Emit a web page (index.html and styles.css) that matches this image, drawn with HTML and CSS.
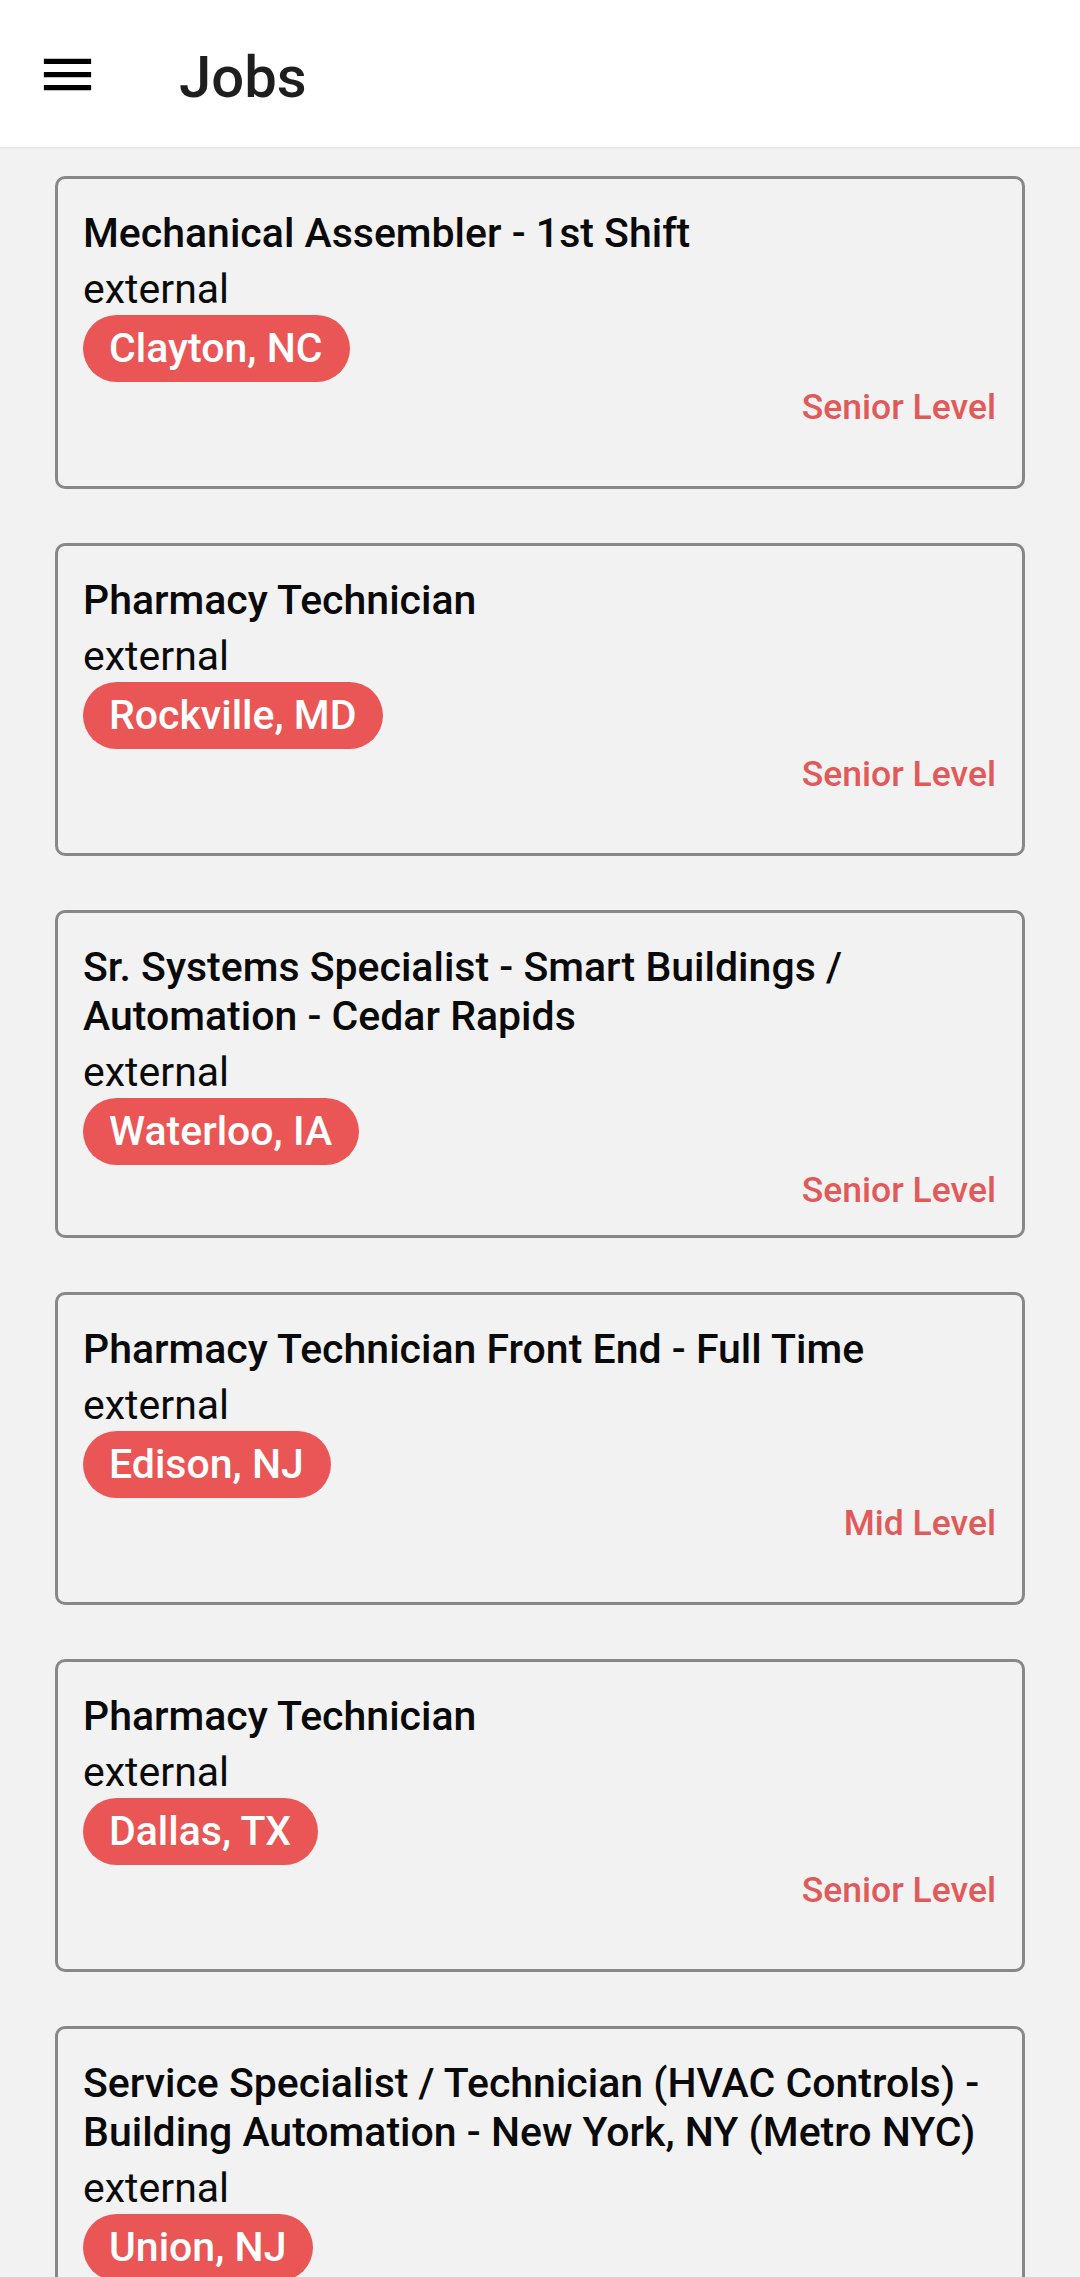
FILE: index.html
```html
<!DOCTYPE html>
<html lang="en">
<head>
<meta charset="utf-8">
<title>Jobs</title>
<link rel="stylesheet" href="styles.css">
</head>
<body>
<header class="appbar">
  <svg class="menu-icon" viewBox="0 0 24 24" aria-hidden="true"><path d="M3 18h18v-2H3v2zm0-5h18v-2H3v2zm0-7v2h18V6H3z"/></svg>
  <h1 class="appbar-title">Jobs</h1>
</header>
<main class="job-list">
  <article class="job-card">
    <div class="job-title">Mechanical Assembler - 1st Shift</div>
    <div class="job-source">external</div>
    <div class="job-location">Clayton, NC</div>
    <div class="job-level">Senior Level</div>
  </article>
  <article class="job-card">
    <div class="job-title">Pharmacy Technician</div>
    <div class="job-source">external</div>
    <div class="job-location">Rockville, MD</div>
    <div class="job-level">Senior Level</div>
  </article>
  <article class="job-card">
    <div class="job-title">Sr. Systems Specialist - Smart Buildings / Automation - Cedar Rapids</div>
    <div class="job-source">external</div>
    <div class="job-location">Waterloo, IA</div>
    <div class="job-level">Senior Level</div>
  </article>
  <article class="job-card">
    <div class="job-title">Pharmacy Technician Front End - Full Time</div>
    <div class="job-source">external</div>
    <div class="job-location">Edison, NJ</div>
    <div class="job-level">Mid Level</div>
  </article>
  <article class="job-card">
    <div class="job-title">Pharmacy Technician</div>
    <div class="job-source">external</div>
    <div class="job-location">Dallas, TX</div>
    <div class="job-level">Senior Level</div>
  </article>
  <article class="job-card">
    <div class="job-title">Service Specialist / Technician (HVAC Controls) - Building Automation - New York, NY (Metro NYC)</div>
    <div class="job-source">external</div>
    <div class="job-location">Union, NJ</div>
    <div class="job-level">Senior Level</div>
  </article>
</main>
</body>
</html>
```
FILE: styles.css
```css
html, body {
  margin: 0;
  padding: 0;
}
body {
  background: #f2f2f2;
  font-family: Roboto, "Noto Sans", "Liberation Sans", sans-serif;
  color: #000;
  overflow: hidden;
}
.appbar {
  height: 147px;
  background: #ffffff;
  display: flex;
  align-items: center;
  padding-left: 36px;
  box-sizing: border-box;
  box-shadow: 0 1px 2px rgba(0, 0, 0, 0.08);
  position: relative;
  z-index: 1;
}
.menu-icon {
  width: 63px;
  height: 63px;
  fill: #000;
  flex: none;
  margin-top: 2px;
}
.appbar-title {
  margin: 6px 0 0 80px;
  font-size: 58px;
  font-weight: 500;
  color: #1e1e1e;
  line-height: 1;
}
.job-list {
  display: flex;
  flex-direction: column;
  gap: 54px;
  padding: 29px 55px 40px;
}
.job-card {
  box-sizing: border-box;
  min-height: 313px;
  border: 3px solid #888888;
  border-radius: 10px;
  padding: 30px 26px 23px 25px;
  display: flex;
  flex-direction: column;
  align-items: flex-start;
}
.job-title {
  font-size: 41px;
  font-weight: 500;
  line-height: 49px;
  color: #0a0a0a;
}
.job-source {
  font-size: 41px;
  font-weight: 400;
  line-height: 49px;
  margin-top: 7px;
  color: #0a0a0a;
}
.job-location {
  margin-top: 1px;
  background: #ea5656;
  color: #ffffff;
  font-size: 41px;
  font-weight: 500;
  line-height: 47px;
  padding: 10px 27px 10px 26px;
  border-radius: 34px;
}
.job-level {
  align-self: flex-end;
  margin-top: 4px;
  font-size: 35.5px;
  font-weight: 500;
  color: #e05a5a;
  line-height: 43px;
}
```
